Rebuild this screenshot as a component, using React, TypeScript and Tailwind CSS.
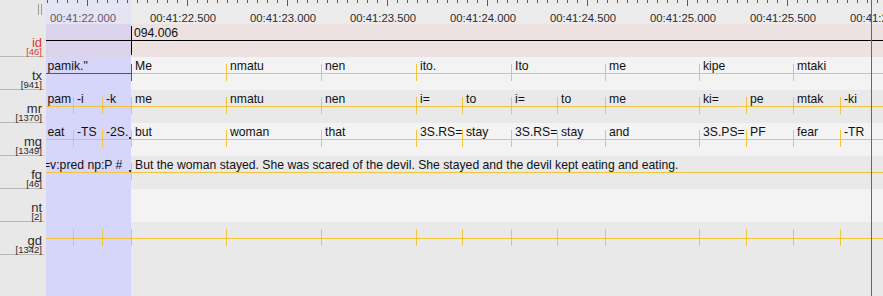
type Seg = { w: string; t?: string; pl?: string }

const YELLOW = "bg-[#f2c53d]"

const labels = [
  { n: "id", c: "[46]", red: true },
  { n: "tx", c: "[941]" },
  { n: "mr", c: "[1370]" },
  { n: "mg", c: "[1349]" },
  { n: "fg", c: "[46]" },
  { n: "nt", c: "[2]" },
  { n: "gd", c: "[1342]" },
]

const times = ["22.000", "22.500", "23.000", "23.500", "24.000", "24.500", "25.000", "25.500", "26.000"]

const txRest: Seg[] = [
  { w: "w-[95px]", t: "Me" },
  { w: "w-[95px]", t: "nmatu" },
  { w: "w-[95px]", t: "nen" },
  { w: "w-[95px]", t: "ito." },
  { w: "w-[94px]", t: "Ito" },
  { w: "w-[94px]", t: "me" },
  { w: "w-[94px]", t: "kipe" },
  { w: "flex-1", t: "mtaki" },
]

const mrSel: Seg[] = [
  { w: "w-[27px]", t: "pam", pl: "pl-[1.5px]" },
  { w: "w-[29px]", t: "-i" },
  { w: "flex-1", t: "-k" },
]

const mrRest: Seg[] = [
  { w: "w-[95px]", t: "me" },
  { w: "w-[95px]", t: "nmatu" },
  { w: "w-[95px]", t: "nen" },
  { w: "w-[46px]", t: "i=" },
  { w: "w-[49px]", t: "to" },
  { w: "w-[46px]", t: "i=" },
  { w: "w-[48px]", t: "to" },
  { w: "w-[94px]", t: "me" },
  { w: "w-[47px]", t: "ki=" },
  { w: "w-[47px]", t: "pe" },
  { w: "w-[47px]", t: "mtak" },
  { w: "flex-1", t: "-ki" },
]

const mgSel: Seg[] = [
  { w: "w-[27px]", t: "eat", pl: "pl-[1.5px]" },
  { w: "w-[29px]", t: "-TS" },
  { w: "flex-1", t: "-2S." },
]

const mgRest: Seg[] = [
  { w: "w-[95px]", t: "but" },
  { w: "w-[95px]", t: "woman" },
  { w: "w-[95px]", t: "that" },
  { w: "w-[46px]", t: "3S.RS=" },
  { w: "w-[49px]", t: "stay" },
  { w: "w-[46px]", t: "3S.RS=" },
  { w: "w-[48px]", t: "stay" },
  { w: "w-[94px]", t: "and" },
  { w: "w-[47px]", t: "3S.PS=" },
  { w: "w-[47px]", t: "PF" },
  { w: "w-[47px]", t: "fear" },
  { w: "flex-1", t: "-TR" },
]

const gdSel: Seg[] = mrSel.map((s) => ({ w: s.w }))
const gdRest: Seg[] = mrRest.map((s) => ({ w: s.w }))

function Segment({ s, tick, line, tickColor }: { s: Seg; tick: boolean; line: string; tickColor: string }) {
  return (
    <div className={`relative h-full ${s.w === "flex-1" ? "flex-1 min-w-0" : "shrink-0 " + s.w}`}>
      {s.t && (
        <div className={`${s.pl ?? "pl-[4px]"} pt-[2px] text-[12.2px] leading-[15px] whitespace-nowrap text-[#111]`}>
          {s.t}
        </div>
      )}
      <div className={`absolute left-0 right-0 top-[16px] h-px ${line}`} />
      {tick && <div className={`absolute left-0 top-[7px] h-[17px] w-px ${tickColor}`} />}
    </div>
  )
}

function Tier(props: {
  bg: string
  sel: Seg[]
  rest: Seg[]
  selLine?: string
  firstTick?: string
  marker?: boolean
}) {
  return (
    <div className="flex h-[33px]">
      <div className="flex w-[85px] shrink-0 overflow-hidden bg-[#d6d6fa]">
        {props.sel.map((s, i) => (
          <Segment key={i} s={s} tick={i > 0} line={props.selLine ?? YELLOW} tickColor={YELLOW} />
        ))}
      </div>
      <div className={`relative flex flex-1 ${props.bg}`}>
        {props.rest.map((s, i) => (
          <Segment key={i} s={s} tick line={YELLOW} tickColor={i === 0 ? props.firstTick ?? YELLOW : YELLOW} />
        ))}
        {props.marker && <div className="absolute left-[-2px] top-[14px] h-[2px] w-[2px] bg-[#333]" />}
      </div>
    </div>
  )
}

export default function App() {
  return (
    <div className="relative flex h-[296px] w-[883px] overflow-hidden font-['Liberation_Sans',Arial,sans-serif]">
      {/* tier labels */}
      <div className="flex w-[46px] shrink-0 flex-col bg-[#e8e8e8]">
        <div className="flex h-[24px] gap-[2px] pl-[38px] pt-[4px]">
          <div className="h-[11px] w-px bg-[#9a9a9a]" />
          <div className="h-[11px] w-px bg-[#9a9a9a]" />
        </div>
        {labels.map((l) => (
          <div
            key={l.n}
            className={`flex h-[33px] w-[44px] flex-col items-end justify-end border-b border-[#b8b8b8] pb-[0.5px] pr-[2px] ${
              l.red ? "text-[#e0342c]" : "text-[#2a2a2a]"
            }`}
          >
            <div className="mb-[1px] text-[13px] leading-[9px]">{l.n}</div>
            <div className="text-[9.5px] leading-[8px]">{l.c}</div>
          </div>
        ))}
      </div>

      {/* timeline */}
      <div className="flex min-w-0 flex-1 flex-col">
        <div className="relative flex h-[24px] shrink-0 bg-[linear-gradient(to_right,#e4e4f2_85px,#ececec_85px)] pl-[4px] pt-[12px]">
          <svg className="absolute left-0 top-0" width="837" height="8">
            {Array.from({ length: 84 }, (_, i) => {
              const x = 1.5 + i * 10
              const tall = i % 10 === 4
              return <line key={i} x1={x} x2={x} y1={0} y2={tall ? 6 : 3} stroke="#5a5a5a" strokeWidth="1" />
            })}
          </svg>
          {times.map((t, i) => (
            <div
              key={t}
              className={`w-[100px] shrink-0 whitespace-nowrap text-[11.3px] leading-[12px] ${
                i === 0 ? "text-[#5c5c6e]" : "text-[#2c2c2c]"
              }`}
            >
              00:41:{t}
            </div>
          ))}
        </div>

        {/* id */}
        <div className="flex h-[33px]">
          <div className="relative w-[85px] shrink-0 bg-[#dbd3ec]">
            <div className="absolute left-0 right-0 top-[16px] h-px bg-black" />
          </div>
          <div className="relative flex-1 bg-[#ede1e2]">
            <div className="pl-[3px] pt-[2px] text-[12.2px] leading-[15px] text-[#111]">094.006</div>
            <div className="absolute left-0 right-0 top-[16px] h-px bg-black" />
            <div className="absolute left-0 top-[2px] h-[29px] w-px bg-black" />
          </div>
        </div>

        <Tier
          bg="bg-[#f3f3f3]"
          sel={[{ w: "flex-1", t: 'pamik."', pl: "pl-[1.5px]" }]}
          rest={txRest}
          selLine="bg-[#2f57c4]"
          firstTick="bg-[#2f57c4]"
        />
        <Tier bg="bg-[#e9e9e9]" sel={mrSel} rest={mrRest} />
        <Tier bg="bg-[#f3f3f3]" sel={mgSel} rest={mgRest} marker />
        <Tier
          bg="bg-[#e9e9e9]"
          sel={[{ w: "flex-1", t: "=v:pred np:P #", pl: "ml-[-3px]" }]}
          rest={[
            {
              w: "flex-1",
              t: "But the woman stayed. She was scared of the devil. She stayed and the devil kept eating and eating.",
            },
          ]}
          marker
        />
        <Tier bg="bg-[#f3f3f3]" sel={[]} rest={[]} />
        <Tier bg="bg-[#e9e9e9]" sel={gdSel} rest={gdRest} />

        <div className="flex flex-1">
          <div className="w-[85px] shrink-0 bg-[#d6d6fa]" />
          <div className="flex-1 bg-[#e9e9e9]" />
        </div>
      </div>

      {/* crosshair */}
      <div className="absolute bottom-0 left-[871px] top-0 w-px bg-[#e0352b]" />
    </div>
  )
}
